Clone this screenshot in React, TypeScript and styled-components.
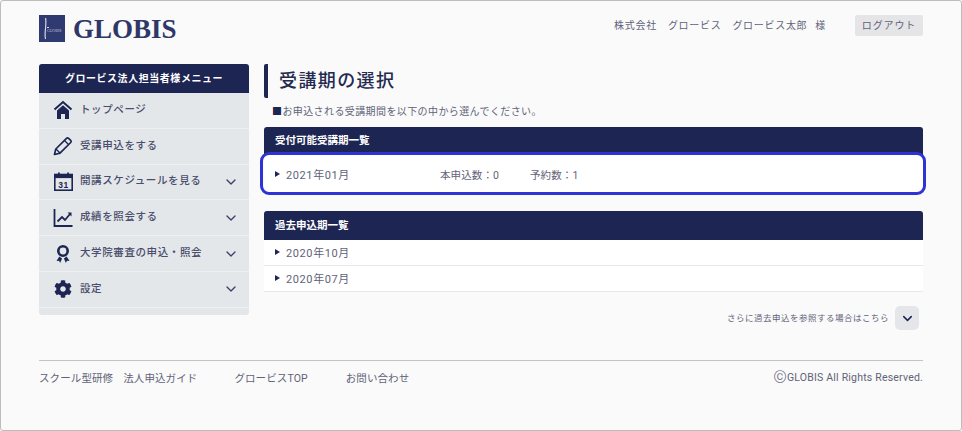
import React from "react";
import styled, { createGlobalStyle } from "styled-components";
import { FaCog } from "react-icons/fa";
import { ChevronDown } from "lucide-react";

const navy = "#1d2553";
const textGrey = "#5f6378";

const GlobalStyle = createGlobalStyle`
  html, body {
    margin: 0;
    padding: 0;
    background: #fafafa;
  }
  body {
    font-family: Roboto, "Noto Sans CJK JP", "Noto Sans", sans-serif;
    color: ${textGrey};
  }
  * {
    box-sizing: border-box;
  }
`;

const Frame = styled.div`
  width: 962px;
  height: 431px;
  border: 1px solid #bdbdbd;
  border-radius: 3px;
  padding: 13px 38px 0;
  overflow: hidden;
`;

const Header = styled.header`
  display: flex;
  justify-content: space-between;
  align-items: flex-start;
  height: 50px;
`;

const Logo = styled.div`
  display: flex;
  align-items: center;
  gap: 8px;
  height: 28px;
`;

const LogoMark = styled.svg`
  width: 26px;
  height: 27px;
  display: block;
`;

const LogoText = styled.span`
  font-family: "Liberation Serif", serif;
  font-weight: 700;
  font-size: 27px;
  color: #2f3768;
  padding-top: 2px;
`;

const UserArea = styled.div`
  display: flex;
  align-items: center;
  height: 21px;
  margin-top: 1px;
  font-size: 10px;
  letter-spacing: 0.7px;
`;

const UserText = styled.span`
  margin-right: ${(p: { $gap: number }) => p.$gap}px;
  padding-bottom: 3px;
`;

const LogoutButton = styled.button`
  width: 68px;
  height: 21px;
  padding: 0 0 3px;
  border: none;
  border-radius: 2px;
  background: #e5e5e7;
  color: ${textGrey};
  font-family: inherit;
  font-size: 10px;
  letter-spacing: 0.9px;
`;

const Columns = styled.div`
  display: flex;
  gap: 15px;
  align-items: flex-start;
`;

const Sidebar = styled.nav`
  width: 210px;
  height: 251px;
  flex-shrink: 0;
  background: #e4e7ea;
  border-radius: 3px;
  overflow: hidden;
`;

const SidebarTitle = styled.div`
  height: 29px;
  padding-bottom: 3px;
  display: flex;
  align-items: center;
  justify-content: center;
  background: ${navy};
  color: #fff;
  font-size: 10px;
  font-weight: 700;
  letter-spacing: 0.55px;
`;

const MenuItem = styled.div`
  height: 35.8px;
  display: flex;
  align-items: center;
  padding: 0 10px 0 14px;
  border-bottom: 1px solid #eff0f2;
  color: #4a4e6c;
  font-size: 10.5px;
  font-weight: 500;
  letter-spacing: 0.6px;
`;

const MenuIcon = styled.span`
  width: 20px;
  height: 20px;
  margin-right: 7px;
  display: flex;
  align-items: center;
  justify-content: center;
  color: ${navy};
  flex-shrink: 0;
`;

const MenuLabel = styled.span`
  flex: 1;
  white-space: nowrap;
  padding-bottom: 4px;
`;

const Chevron = styled(ChevronDown)`
  color: #3a4166;
  flex-shrink: 0;
`;

const Main = styled.main`
  flex: 1;
  min-width: 0;
`;

const PageTitle = styled.h1`
  height: 34px;
  margin: 0;
  padding: 0 0 4px 11px;
  display: flex;
  align-items: center;
  border-left: 4px solid ${navy};
  border-radius: 2px;
  color: #23294f;
  font-size: 18px;
  font-weight: 500;
  letter-spacing: 1.4px;
`;

const Lead = styled.p`
  height: 29px;
  margin: 0;
  padding: 6px 0 0 8px;
  font-size: 10px;
  line-height: 15px;
  letter-spacing: 0.4px;
`;

const Square = styled.span`
  color: ${navy};
`;

const Panel = styled.section`
  margin-bottom: 18px;
`;

const PanelTitle = styled.div`
  display: flex;
  align-items: center;
  height: ${(p: { $h: number }) => p.$h}px;
  padding: 0 0 3px 11px;
  background: ${navy};
  border-radius: 3px 3px 0 0;
  color: #fff;
  font-size: 10.5px;
  font-weight: 700;
`;

const HighlightRow = styled.div`
  position: relative;
  height: 38px;
  display: flex;
  align-items: center;
  padding-left: 11px;
  background: #fff;
  font-size: 11px;
  letter-spacing: 0.6px;

  &::after {
    content: "";
    position: absolute;
    inset: -3px -3px -2px -4px;
    border: 3.5px solid #2e33d6;
    border-radius: 9px;
  }
`;

const Row = styled.div`
  height: 26px;
  display: flex;
  align-items: center;
  padding: 0 0 2px 11px;
  background: #fff;
  border-bottom: 1px solid #e8e8ea;
  font-size: 11px;
  letter-spacing: 0.6px;
`;

const Marker = styled.span`
  width: 0;
  height: 0;
  margin-right: 6px;
  border-left: 5px solid ${navy};
  border-top: 3px solid transparent;
  border-bottom: 3px solid transparent;
`;

const Period = styled.span`
  width: 154px;
`;

const Count = styled.span`
  width: 90px;
  font-size: 10.5px;
  letter-spacing: 0.1px;
`;

const MoreRow = styled.div`
  display: flex;
  justify-content: flex-end;
  align-items: center;
  gap: 6px;
  margin-top: -4px;
  padding-right: 4px;
  font-size: 8.5px;
  letter-spacing: 0.5px;
`;

const MoreLabel = styled.span`
  padding-bottom: 3px;
`;

const MoreButton = styled.button`
  width: 24px;
  height: 24px;
  padding: 0;
  display: flex;
  align-items: center;
  justify-content: center;
  border: none;
  border-radius: 5px;
  background: #e4e6ea;
  color: ${navy};
`;

const Footer = styled.footer`
  margin-top: 30px;
  height: 36px;
  padding-bottom: 3px;
  display: flex;
  align-items: center;
  justify-content: space-between;
  border-top: 1px solid #c4c4c4;
  font-size: 10.5px;
  letter-spacing: 0.1px;
`;

const FooterLinks = styled.div`
  display: flex;
`;

const FooterLink = styled.span`
  margin-right: ${(p: { $gap: number }) => p.$gap}px;
`;

const Copyright = styled.span`
  display: flex;
  align-items: center;
  letter-spacing: 0.2px;
`;

const CopyMark = styled.span`
  font-size: 17px;
  font-weight: 300;
  line-height: 1;
`;

const HomeIcon = () => (
  <svg width="20" height="20" viewBox="0 0 20 20">
    <path d="M1.5 9.5 10 2l8.5 7.5" fill="none" stroke={navy} strokeWidth="2" />
    <path d="M4 10.5 10 5.2l6 5.3V19h-4v-5H8v5H4z" fill={navy} />
  </svg>
);

const PencilIcon = () => (
  <svg width="20" height="20" viewBox="0 0 20 20">
    <path d="M1.5 18.5 2.8 13 13.5 2.3a1.5 1.5 0 0 1 2.1 0l2.1 2.1a1.5 1.5 0 0 1 0 2.1L7 17.2z" fill="none" stroke={navy} strokeWidth="1.7" strokeLinejoin="round" />
    <path d="M11.5 4.5l4 4M3 13l4 4" fill="none" stroke={navy} strokeWidth="1.3" />
  </svg>
);

const CalendarIcon = () => (
  <svg width="19" height="19" viewBox="0 0 19 19">
    <rect x="0.8" y="2.5" width="17.4" height="15.7" fill="none" stroke={navy} strokeWidth="1.6" />
    <rect x="0.8" y="2.5" width="17.4" height="3.6" fill={navy} />
    <rect x="4" y="0.5" width="1.8" height="3.5" fill={navy} />
    <rect x="13.2" y="0.5" width="1.8" height="3.5" fill={navy} />
    <text x="9.5" y="15.5" textAnchor="middle" fontSize="8.5" fontWeight="700" fontFamily="Liberation Sans, sans-serif" fill={navy}>
      31
    </text>
  </svg>
);

const ChartIcon = () => (
  <svg width="20" height="20" viewBox="0 0 20 20">
    <path d="M1.5 1v17h18" fill="none" stroke={navy} strokeWidth="1.8" />
    <path d="M4.5 13.5 9 9l3 3 5-6" fill="none" stroke={navy} strokeWidth="1.8" />
    <path d="M14.5 4.5h4v4z" fill={navy} />
  </svg>
);

const AwardIcon = () => (
  <svg width="20" height="20" viewBox="0 0 20 20">
    <circle cx="10" cy="7" r="4.7" fill="none" stroke={navy} strokeWidth="2.6" />
    <path d="M6.3 12.5 3.5 17l2.6-.3 1 2.3 2-4.5zM13.7 12.5l2.8 4.5-2.6-.3-1 2.3-2-4.5z" fill={navy} />
  </svg>
);

const menu = [
  { label: "トップページ", icon: <HomeIcon />, more: false },
  { label: "受講申込をする", icon: <PencilIcon />, more: false },
  { label: "開講スケジュールを見る", icon: <CalendarIcon />, more: true },
  { label: "成績を照会する", icon: <ChartIcon />, more: true },
  { label: "大学院審査の申込・照会", icon: <AwardIcon />, more: true },
  { label: "設定", icon: <FaCog size={18} />, more: true },
];

const App = () => {
  return (
    <Frame>
      <GlobalStyle />
      <Header>
        <Logo>
          <LogoMark viewBox="0 0 26 27">
            <rect width="26" height="27" fill="#2f3a70" />
            <path d="M6.5 3C8 9 5 18 6.5 24" fill="none" stroke="#d5d8e8" strokeWidth="1.2" />
            <path d="M8 12.5h2" stroke="#d5d8e8" strokeWidth="1" />
            <text x="8" y="16.5" fontSize="4" fontFamily="Liberation Serif, serif" fill="#c3c8dd">
              GLOBIS
            </text>
          </LogoMark>
          <LogoText>GLOBIS</LogoText>
        </Logo>
        <UserArea>
          <UserText $gap={11}>株式会社</UserText>
          <UserText $gap={11}>グロービス</UserText>
          <UserText $gap={8}>グロービス太郎</UserText>
          <UserText $gap={29}>様</UserText>
          <LogoutButton>ログアウト</LogoutButton>
        </UserArea>
      </Header>
      <Columns>
        <Sidebar>
          <SidebarTitle>グロービス法人担当者様メニュー</SidebarTitle>
          {menu.map((item) => (
            <MenuItem key={item.label}>
              <MenuIcon>{item.icon}</MenuIcon>
              <MenuLabel>{item.label}</MenuLabel>
              {item.more && <Chevron size={16} strokeWidth={2} />}
            </MenuItem>
          ))}
        </Sidebar>
        <Main>
          <PageTitle>受講期の選択</PageTitle>
          <Lead>
            <Square>■</Square>お申込される受講期間を以下の中から選んでください。
          </Lead>
          <Panel>
            <PanelTitle $h={28}>受付可能受講期一覧</PanelTitle>
            <HighlightRow>
              <Marker />
              <Period>2021年01月</Period>
              <Count>本申込数：0</Count>
              <Count>予約数：1</Count>
            </HighlightRow>
          </Panel>
          <Panel>
            <PanelTitle $h={29}>過去申込期一覧</PanelTitle>
            <Row>
              <Marker />
              2020年10月
            </Row>
            <Row>
              <Marker />
              2020年07月
            </Row>
          </Panel>
          <MoreRow>
            <MoreLabel>さらに過去申込を参照する場合はこちら</MoreLabel>
            <MoreButton>
              <ChevronDown size={15} strokeWidth={2.4} />
            </MoreButton>
          </MoreRow>
        </Main>
      </Columns>
      <Footer>
        <FooterLinks>
          <FooterLink $gap={10}>スクール型研修</FooterLink>
          <FooterLink $gap={37}>法人申込ガイド</FooterLink>
          <FooterLink $gap={38}>グロービスTOP</FooterLink>
          <FooterLink $gap={0}>お問い合わせ</FooterLink>
        </FooterLinks>
        <Copyright>
          <CopyMark>©</CopyMark>GLOBIS All Rights Reserved.
        </Copyright>
      </Footer>
    </Frame>
  );
};

export default App;
